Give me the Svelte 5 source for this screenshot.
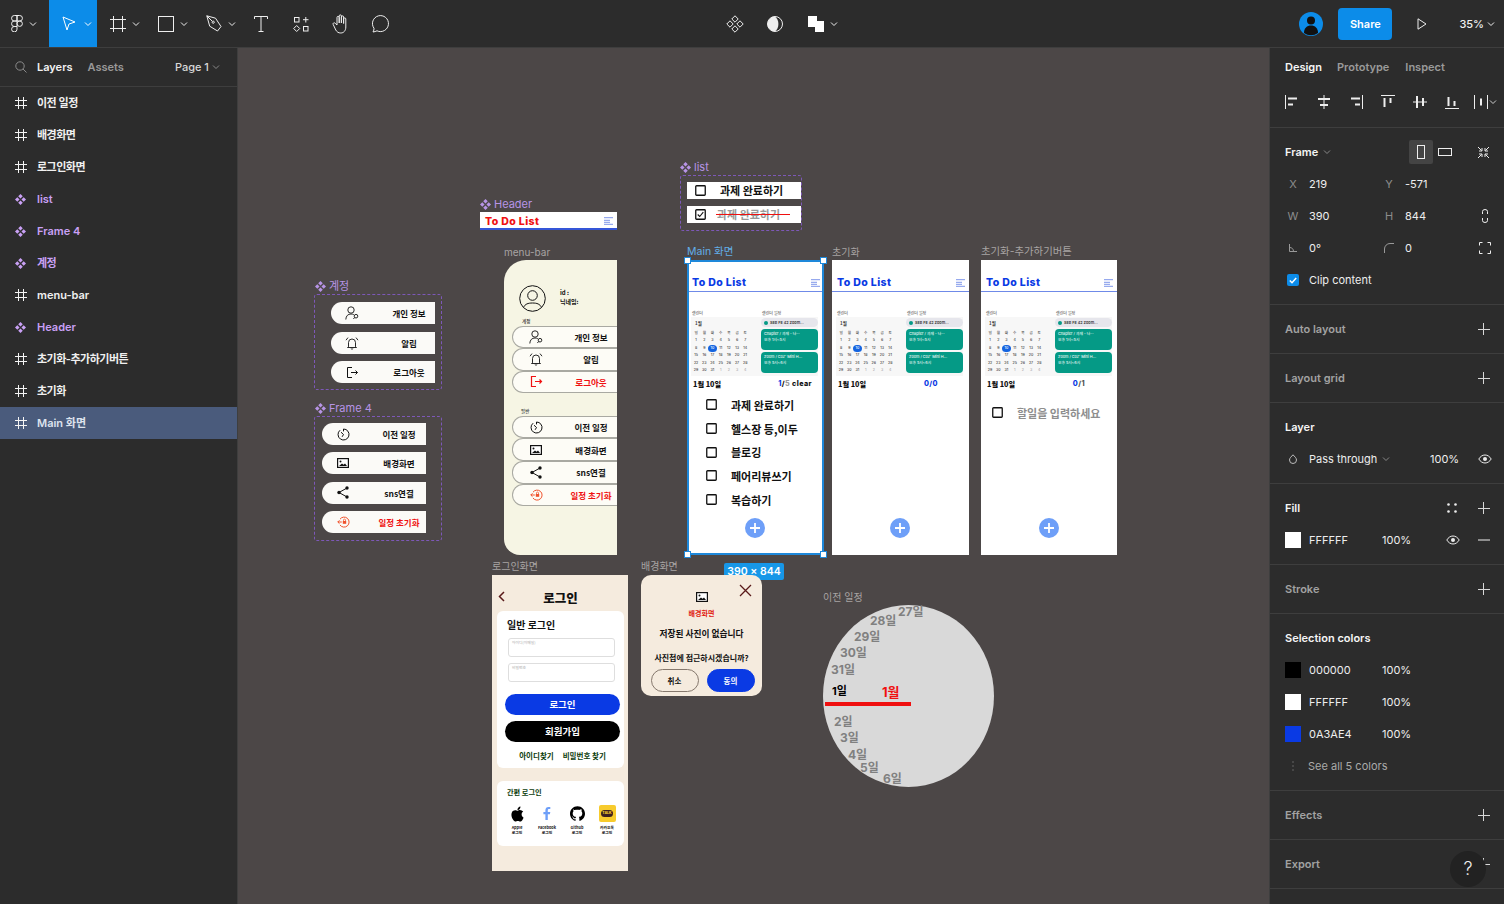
<script>
  const layers = [
    { name: '이전 일정', kind: 'frame' },
    { name: '배경화면', kind: 'frame' },
    { name: '로그인화면', kind: 'frame' },
    { name: 'list', kind: 'comp' },
    { name: 'Frame 4', kind: 'comp' },
    { name: '계정', kind: 'comp' },
    { name: 'menu-bar', kind: 'frame' },
    { name: 'Header', kind: 'comp' },
    { name: '초기화-추가하기버튼', kind: 'frame' },
    { name: '초기화', kind: 'frame' },
    { name: 'Main 화면', kind: 'frame', selected: true }
  ];

  const isKo = (s) => /^[가-힣\s-]+$/.test(s);

  const account = [
    { icon: 'person', label: '개인 정보' },
    { icon: 'bell', label: '알림' },
    { icon: 'logout', label: '로그아웃' }
  ];
  const general = [
    { icon: 'clock', label: '이전 일정' },
    { icon: 'image', label: '배경화면' },
    { icon: 'share', label: 'sns연결' },
    { icon: 'reset', label: '일정 초기화', red: true }
  ];

  const weekdays = ['일', '월', '화', '수', '목', '금', '토'];
  const days = Array.from({ length: 31 }, (_, i) => i + 1);
  const nextDays = [1, 2, 3, 4];

  const tasks = ['과제 완료하기', '헬스장 등,이두', '블로깅', '페어리뷰쓰기', '복습하기'];

  const dial = [
    { t: '27일', x: 75, y: 0 },
    { t: '28일', x: 47, y: 9 },
    { t: '29일', x: 31, y: 25 },
    { t: '30일', x: 17, y: 41 },
    { t: '31일', x: 8, y: 58 },
    { t: '2일', x: 11, y: 110 },
    { t: '3일', x: 17, y: 126 },
    { t: '4일', x: 25, y: 143 },
    { t: '5일', x: 37, y: 156 },
    { t: '6일', x: 60, y: 167 }
  ];

  const colors = [
    { hex: '000000', c: '#000000' },
    { hex: 'FFFFFF', c: '#ffffff' },
    { hex: '0A3AE4', c: '#0a3ae4' }
  ];

  const socials = [
    { icon: 'apple', l1: 'Apple', l2: '로그인' },
    { icon: 'facebook', l1: 'Facebook', l2: '로그인' },
    { icon: 'github', l1: 'Github', l2: '로그인' },
    { icon: 'kakao', l1: '카카오톡', l2: '로그인' }
  ];
</script>

{#snippet chev()}
  <svg class="chev" width="8" height="8" viewBox="0 0 8 8"><path d="M1 2.5 4 5.5 7 2.5" fill="none" stroke="currentColor" /></svg>
{/snippet}

{#snippet plus()}
  <svg width="12" height="12" viewBox="0 0 12 12"><path d="M5.500 0v12M0 6.500h12" stroke="#d8d8d8" /></svg>
{/snippet}

{#snippet eye()}
  <svg width="14" height="10" viewBox="0 0 14 10"><path d="M.8 5C2.400 2.400 4.500 1 7 1s4.600 1.400 6.200 4C11.600 7.600 9.500 9 7 9S2.400 7.600.8 5Z" fill="none" stroke="#eee" /><circle cx="7" cy="5" r="2" fill="#eee" /></svg>
{/snippet}

{#snippet comp4(color, size = 13)}
  <svg width={size} height={size} viewBox="0 0 13 13" fill={color}>
    <path d="M6.500 0 9.200 2.700 6.500 5.400 3.800 2.700ZM2.700 3.800 5.400 6.500 2.700 9.200 0 6.500ZM10.300 3.800 13 6.500 10.300 9.200 7.600 6.500ZM6.500 7.600 9.200 10.300 6.500 13 3.800 10.300Z" />
  </svg>
{/snippet}

{#snippet hash()}
  <svg width="12" height="12" viewBox="0 0 12 12"><path d="M3.500 0v12M8.500 0v12M0 3.500h12M0 8.500h12" stroke="#f4f4f4" /></svg>
{/snippet}

{#snippet burger()}
  <svg class="burger" width="9" height="8" viewBox="0 0 9 8"><path d="M0 .7h9M0 3.300h6M0 5.300h6M0 7.300h9" stroke="#6f8ae8" stroke-width=".9" /></svg>
{/snippet}

{#snippet glyph(name)}
  {#if name === 'person'}
    <svg width="15" height="14" viewBox="0 0 15 14" fill="none" stroke="#111" stroke-width=".9"><circle cx="6" cy="4" r="3.200" /><path d="M.8 13.500C1 9.800 3 8 6 8c1 0 2 .2 2.800.7" /><circle cx="11" cy="10.200" r="1.800" /><path d="M9.600 11.500 8.400 13" /></svg>
  {:else if name === 'bell'}
    <svg width="14" height="14" viewBox="0 0 14 14" fill="none" stroke="#111" stroke-width=".9"><path d="M3.500 10.800V6.500a3.500 3.500 0 0 1 7 0v4.300l1 .7h-9ZM5.800 12.500c.5.700 1.900.7 2.400 0M1 4.200 3 1.600M13 4.200 11 1.600" /></svg>
  {:else if name === 'logout'}
    <svg width="13" height="13" viewBox="0 0 13 13" fill="none" stroke="#111" stroke-width="1"><path d="M6 1.500H1.500v10H6M5 6.500h6.500M9.500 4.500l2 2-2 2" /></svg>
  {:else if name === 'logout-red'}
    <svg width="13" height="13" viewBox="0 0 13 13" fill="none" stroke="#f01010" stroke-width="1.200"><path d="M6 1.500H1.500v10H6M5 6.500h6.500M9.500 4.500l2 2-2 2" /></svg>
  {:else if name === 'clock'}
    <svg width="13" height="13" viewBox="0 0 13 13" fill="none" stroke="#111" stroke-width="1"><path d="M6.500 1a5.500 5.500 0 1 1-3.400 1.200M6.500 1v2.400M4 4.200l2.500 2.300-1.400 2.300" /></svg>
  {:else if name === 'image'}
    <svg width="12" height="10" viewBox="0 0 12 10"><rect x=".6" y=".6" width="10.800" height="8.800" fill="#fff" stroke="#111" stroke-width="1.200" /><circle cx="3.500" cy="3.500" r="1" fill="#111" /><path d="M2 8 5 5.500 6.500 6.800 8 5.500 10 8Z" fill="#111" /></svg>
  {:else if name === 'share'}
    <svg width="12" height="13" viewBox="0 0 12 13"><path d="M10 2 2 6.500l8 4.500" fill="none" stroke="#111" /><circle cx="10" cy="2" r="1.700" fill="#111" /><circle cx="2" cy="6.500" r="1.700" fill="#111" /><circle cx="10" cy="11" r="1.700" fill="#111" /></svg>
  {:else if name === 'reset'}
    <svg width="13" height="12" viewBox="0 0 13 12" fill="none" stroke="#f0522c" stroke-width="1"><path d="M3 3.200A5 5 0 1 1 3 9M.8 6h4M2.500 4.300.8 6l1.700 1.700" /><rect x="5.800" y="5" width="3.400" height="2.800" fill="#f0522c" stroke="none" /><path d="M6.500 5V4a1 1 0 0 1 2 0v1" stroke-width=".7" /></svg>
  {:else if name === 'apple'}
    <svg width="15" height="16" viewBox="0 0 24 24" fill="#000"><path d="M12.152 6.896c-.948 0-2.415-1.078-3.960-1.040-2.040.027-3.910 1.183-4.961 3.014-2.117 3.675-.546 9.103 1.519 12.090 1.013 1.454 2.208 3.090 3.792 3.039 1.520-.065 2.090-.987 3.935-.987 1.831 0 2.350.987 3.960.948 1.637-.026 2.676-1.480 3.676-2.948 1.156-1.688 1.636-3.325 1.662-3.415-.039-.013-3.182-1.221-3.220-4.857-.026-3.040 2.480-4.494 2.597-4.559-1.429-2.090-3.623-2.324-4.390-2.376-2-.156-3.675 1.090-4.610 1.090zM15.530 3.830c.843-1.012 1.400-2.427 1.245-3.830-1.207.052-2.662.805-3.532 1.818-.780.896-1.454 2.338-1.273 3.714 1.338.104 2.715-.688 3.559-1.701" /></svg>
  {:else if name === 'facebook'}
    <svg width="8" height="13" viewBox="0 0 8 13" fill="#6e9ff8"><path d="M2.400 13V7.200H.4V5h2V3.300C2.400 1.200 3.600 0 5.500 0c.8 0 1.600.1 1.800.1v2H6.100C5 2.100 4.800 2.700 4.800 3.400V5h2.500l-.4 2.200H4.800V13Z" /></svg>
  {:else if name === 'github'}
    <svg width="15" height="15" viewBox="0 0 24 24" fill="#000"><path d="M12 .297c-6.630 0-12 5.373-12 12 0 5.303 3.438 9.800 8.205 11.385.6.113.82-.258.82-.577 0-.285-.01-1.040-.015-2.040-3.338.724-4.042-1.610-4.042-1.610C4.422 18.070 3.633 17.700 3.633 17.700c-1.087-.744.084-.729.084-.729 1.205.084 1.838 1.236 1.838 1.236 1.070 1.835 2.809 1.305 3.495.998.108-.776.417-1.305.76-1.605-2.665-.3-5.466-1.332-5.466-5.930 0-1.310.465-2.380 1.235-3.220-.135-.303-.54-1.523.105-3.176 0 0 1.005-.322 3.300 1.230.96-.267 1.980-.399 3-.405 1.020.006 2.040.138 3 .405 2.280-1.552 3.285-1.230 3.285-1.230.645 1.653.24 2.873.12 3.176.765.84 1.230 1.910 1.230 3.220 0 4.610-2.805 5.625-5.475 5.920.42.36.81 1.096.81 2.220 0 1.606-.015 2.896-.015 3.286 0 .315.21.69.825.57C20.565 22.092 24 17.592 24 12.297c0-6.627-5.373-12-12-12" /></svg>
  {:else if name === 'kakao'}
    <div class="kakao"><span>TALK</span></div>
  {/if}
{/snippet}

{#snippet pill(item, kind)}
  <div class="pill {kind}" class:red={item.red}>
    <span class="pill-ic">{@render glyph(item.icon)}</span>
    <span class="pill-tx">{item.label}</span>
  </div>
{/snippet}

{#snippet calendar()}
  <div class="cal">
    <div class="cal-left">
      <div class="cal-head">캘린더</div>
      <div class="cal-box">
        <div class="cal-month">1월</div>
        <div class="cal-grid">
          {#each weekdays as w}<span>{w}</span>{/each}
          {#each days as d}<span class:today={d === 10}>{d}</span>{/each}
          {#each nextDays as d}<span class="next">{d}</span>{/each}
        </div>
      </div>
    </div>
    <div class="cal-right">
      <div class="cal-head">캘린더 일정</div>
      <div class="cal-box side">
        <div class="ev-pill"><i></i>SEB FE 42 Zoom...</div>
        <div class="ev">Chapter / 과제 - 나···<br />오후 1시~5시</div>
        <div class="ev">Zoom / Coz' Mini H...<br />오후 5시~6시</div>
      </div>
    </div>
  </div>
{/snippet}

{#snippet todoHead()}
  <div class="todo-head"><span>To Do List</span>{@render burger()}</div>
{/snippet}

{#snippet checkbox(checked = false)}
  <svg class="cb" width="11" height="11" viewBox="0 0 11 11"><rect x=".75" y=".75" width="9.500" height="9.500" rx=".8" fill="#fff" stroke="#111" stroke-width="1.300" />{#if checked}<path d="M2.700 5.500 4.700 7.500 8.300 3.200" fill="none" stroke="#111" stroke-width="1.100" />{/if}</svg>
{/snippet}

{#snippet addBtn()}
  <div class="add"><svg width="10" height="10" viewBox="0 0 10 10"><path d="M5 0v10M0 5h10" stroke="#fff" stroke-width="1.800" /></svg></div>
{/snippet}

<div class="app">
  <header class="toolbar">
    <div class="tools">
      <button class="tool w49">
        <svg width="12" height="17" viewBox="0 0 12 17" fill="none" stroke="#eee"><path d="M6 .5H3.300a2.700 2.700 0 0 0 0 5.500H6ZM6 .5h2.700a2.700 2.700 0 0 1 0 5.500H6ZM6 6H3.300a2.700 2.700 0 0 0 0 5.500H6ZM11.400 8.700a2.700 2.700 0 1 1-5.400 0 2.700 2.700 0 0 1 5.400 0ZM6 11.500H3.300A2.700 2.700 0 1 0 6 14.200Z" /></svg>
        {@render chev()}
      </button>
      <button class="tool w48 active">
        <svg width="14" height="15" viewBox="0 0 14 15" fill="none" stroke="#fff"><path d="M1 1 5 14 7 8 13 6Z" /></svg>
        {@render chev()}
      </button>
      <button class="tool w48">
        <svg width="16" height="16" viewBox="0 0 16 16"><path d="M3.500 0v16M12.500 0v16M0 3.500h16M0 12.500h16" stroke="#eee" /></svg>
        {@render chev()}
      </button>
      <button class="tool w48">
        <svg width="16" height="16" viewBox="0 0 16 16"><rect x=".5" y=".5" width="15" height="15" fill="none" stroke="#eee" /></svg>
        {@render chev()}
      </button>
      <button class="tool w48">
        <svg width="16" height="17" viewBox="0 0 16 17" fill="none" stroke="#eee"><path d="M.8.800 9.500 3.200 15 11.500l-3.500 4.500-7.800-4.800Z" /><path d="M.8.800 6 6" /><circle cx="7.200" cy="7.200" r="1.100" /></svg>
        {@render chev()}
      </button>
      <button class="tool w40">
        <svg width="14" height="16" viewBox="0 0 14 16"><path d="M.5 3V.5h13V3M7 .5v15M4.500 15.500h5" fill="none" stroke="#eee" /></svg>
      </button>
      <button class="tool w40">
        <svg width="16" height="16" viewBox="0 0 16 16" fill="none" stroke="#eee"><rect x="1.500" y="1.500" width="4.500" height="4.500" /><rect x="10.500" y="10.500" width="4.500" height="4.500" /><path d="M12.800 1v5.500M10 3.700h5.500M3.700 9.500l3 3-3 3-3-3Z" /></svg>
      </button>
      <button class="tool w40">
        <svg width="18" height="20" viewBox="0 0 18 20" fill="none" stroke="#eee"><path d="M5 11V3.500a1.100 1.100 0 0 1 2.200 0V9 2a1.100 1.100 0 0 1 2.200 0v7-6a1.100 1.100 0 0 1 2.200 0v6.500-4.500a1.100 1.100 0 0 1 2.200 0v8c0 3.600-2 6-5 6-2.500 0-3.800-1-5-3L1.200 10.500c-.7-1.300 1-2.400 2-1.200Z" /></svg>
      </button>
      <button class="tool w40">
        <svg width="18" height="18" viewBox="0 0 18 18" fill="none" stroke="#eee"><path d="M1 17c.8-1.200 1.100-2.600 1-3.700A8 8 0 1 1 5 15.800 12 12 0 0 1 1 17Z" /></svg>
      </button>
    </div>
    <div class="tools mid">
      <button class="tool w40">
        <svg width="18" height="18" viewBox="0 0 18 18" fill="none" stroke="#eee"><path d="M9 .8 12.200 4 9 7.200 5.800 4ZM4 5.800 7.200 9 4 12.200.8 9ZM14 5.800 17.200 9 14 12.200 10.800 9ZM9 10.800 12.200 14 9 17.200 5.800 14Z" /></svg>
      </button>
      <button class="tool w40">
        <svg width="16" height="16" viewBox="0 0 16 16"><circle cx="8" cy="8" r="7.500" fill="none" stroke="#eee" /><path d="M8 .5a7.500 7.500 0 0 0 0 15c2.300-1.800 3.400-4.400 3.400-7.500S10.300 2.300 8 .5Z" fill="#eee" /></svg>
      </button>
      <button class="tool w48">
        <svg width="16" height="16" viewBox="0 0 16 16" fill="#fff"><path d="M0 0h9v5h7v11H7v-5H0Z" /></svg>
        {@render chev()}
      </button>
    </div>
    <div class="tools right">
      <svg class="avatar" width="24" height="24" viewBox="0 0 24 24"><circle cx="12" cy="12" r="12" fill="#0c8ce9" /><circle cx="12" cy="8.500" r="4" fill="#111" /><path d="M5 21c0-5 3-7.500 7-7.500s7 2.500 7 7.500a12 12 0 0 1-14 0Z" fill="#111" /></svg>
      <div class="share">Share</div>
      <svg class="play" width="10" height="12" viewBox="0 0 10 12"><path d="M1 .8 9 6l-8 5.200Z" fill="none" stroke="#eee" /></svg>
      <div class="zoom-val">35%{@render chev()}</div>
    </div>
  </header>

  <main class="body">
    <aside class="left">
      <div class="left-head">
        <svg width="12" height="12" viewBox="0 0 12 12" fill="none" stroke="#8a8a8a"><circle cx="5" cy="5" r="4.200" /><path d="M8 8l3.500 3.500" /></svg>
        <span class="tab on">Layers</span>
        <span class="tab">Assets</span>
        <span class="page">Page 1{@render chev()}</span>
      </div>
      {#each layers as l}
        <div class="layer" class:selected={l.selected} class:comp={l.kind === 'comp'}>
          <span class="layer-ic">
            {#if l.kind === 'comp'}{@render comp4('#c9a0f5', 11)}{:else}{@render hash()}{/if}
          </span>
          <span class:ko={isKo(l.name)}>{l.name}</span>
        </div>
      {/each}
    </aside>

    <section class="canvas">
      <div class="world">
        <!-- 계정 -->
        <div class="lbl comp-lbl at-acc-l">{@render comp4('#b794e6', 11)}계정</div>
        <div class="dash acc">
          {#each account as item}{@render pill(item, 'a')}{/each}
        </div>

        <!-- Frame 4 -->
        <div class="lbl comp-lbl at-f4-l">{@render comp4('#b794e6', 11)}Frame 4</div>
        <div class="dash f4">
          {#each general as item}{@render pill(item, 'c')}{/each}
        </div>

        <!-- Header -->
        <div class="lbl comp-lbl at-hd-l">{@render comp4('#b794e6', 11)}Header</div>
        <div class="head-comp"><span>To Do List</span>{@render burger()}</div>

        <!-- menu-bar -->
        <div class="lbl at-mb-l">menu-bar</div>
        <div class="menubar">
          <div class="mb-user">
            <svg width="27" height="27" viewBox="0 0 27 27" fill="none" stroke="#111" stroke-width="1"><circle cx="13.500" cy="13.500" r="12.800" /><circle cx="13.500" cy="10.500" r="4.800" /><path d="M4.500 22.500c1.500-3.500 4.500-4.500 9-4.500s7.500 1 9 4.500" /></svg>
            <div class="mb-id">id :<br />닉네임:</div>
          </div>
          <div class="mb-cap first">계정</div>
          <div class="mb-list">
            {@render pill(account[0], 'b')}
            {@render pill(account[1], 'b')}
            <div class="pill b red">
              <span class="pill-ic">{@render glyph('logout-red')}</span>
              <span class="pill-tx">로그아웃</span>
            </div>
          </div>
          <div class="mb-cap second">일반</div>
          <div class="mb-list">
            {#each general as item}{@render pill(item, 'b')}{/each}
          </div>
        </div>

        <!-- list -->
        <div class="lbl comp-lbl at-li-l">{@render comp4('#b794e6', 11)}list</div>
        <div class="dash li">
          <div class="li-row">{@render checkbox()}<span>과제 완료하기</span></div>
          <div class="li-row done">{@render checkbox(true)}<span>과제 완료하기</span><i></i></div>
        </div>

        <!-- Main -->
        <div class="lbl at-main-l">Main 화면</div>
        <div class="todo main-frame">
          {@render todoHead()}
          {@render calendar()}
          <div class="date-row"><b>1월 10일</b><span class="count wide"><em>1</em>/<s>5</s> clear</span></div>
          <div class="tasks">
            {#each tasks as t}
              <div class="task">{@render checkbox()}<span>{t}</span></div>
            {/each}
          </div>
          {@render addBtn()}
          <i class="h tl"></i><i class="h tr"></i><i class="h bl"></i><i class="h br"></i>
        </div>
        <div class="size-tag">390 × 844</div>

        <!-- 초기화 -->
        <div class="lbl at-in-l">초기화</div>
        <div class="todo init-frame">
          {@render todoHead()}
          {@render calendar()}
          <div class="date-row"><b>1월 10일</b><span class="count c00"><em>0/0</em></span></div>
          {@render addBtn()}
        </div>

        <!-- 초기화-추가하기버튼 -->
        <div class="lbl at-ia-l">초기화-추가하기버튼</div>
        <div class="todo add-frame">
          {@render todoHead()}
          {@render calendar()}
          <div class="date-row"><b>1월 10일</b><span class="count c01"><em>0</em>/1</span></div>
          <div class="task hint">{@render checkbox()}<span>할일을 입력하세요</span></div>
          {@render addBtn()}
        </div>

        <!-- 로그인화면 -->
        <div class="lbl at-lg-l">로그인화면</div>
        <div class="login">
          <div class="login-top">
            <svg width="7" height="11" viewBox="0 0 7 11"><path d="M6 1 1.500 5.500 6 10" fill="none" stroke="#5a1a1a" stroke-width="1.500" /></svg>
            <b>로그인</b>
          </div>
          <div class="login-card">
            <div class="lc-title">일반 로그인</div>
            <div class="inp">아이디(이메일)</div>
            <div class="inp">비밀번호</div>
            <div class="lbtn blue">로그인</div>
            <div class="lbtn black">회원가입</div>
            <div class="lc-links"><span>아이디찾기</span><span>비밀번호 찾기</span></div>
          </div>
          <div class="login-card easy">
            <div class="easy-title">간편 로그인</div>
            <div class="socials">
              {#each socials as s}
                <div class="soc">
                  <div class="soc-ic">{@render glyph(s.icon)}</div>
                  <div class="soc-tx">{s.l1}<br />{s.l2}</div>
                </div>
              {/each}
            </div>
          </div>
        </div>

        <!-- 배경화면 -->
        <div class="lbl at-bg-l">배경화면</div>
        <div class="bgd">
          <svg class="bgd-x" width="13" height="13" viewBox="0 0 13 13"><path d="M1 1l11 11M12 1 1 12" stroke="#5a1a1a" stroke-width="1.300" /></svg>
          {@render glyph('image')}
          <div class="bgd-red">배경화면</div>
          <div class="bgd-a">저장된 사진이 없습니다</div>
          <div class="bgd-b">사진첩에 접근하시겠습니까?</div>
          <div class="bgd-btns"><span class="no">취소</span><span class="yes">동의</span></div>
        </div>

        <!-- 이전 일정 -->
        <div class="lbl at-pv-l">이전 일정</div>
        <div class="dial">
          {#each dial as d}
            <span class="dial-day" style="left:{d.x}px;top:{d.y}px">{d.t}</span>
          {/each}
          <span class="dial-now">1일</span>
          <span class="dial-month">1월</span>
          <i class="dial-line"></i>
        </div>
      </div>
    </section>

    <aside class="right-panel">
      <div class="tabs">
        <span class="on">Design</span><span>Prototype</span><span class="insp">Inspect</span>
      </div>
      <div class="aligns">
        <svg width="14" height="14" viewBox="0 0 14 14"><path d="M.5 0v14" stroke="#eee" /><path d="M3 3.500h9M3 9.500h5" stroke="#eee" stroke-width="2" /></svg>
        <svg width="14" height="14" viewBox="0 0 14 14"><path d="M7 0v14" stroke="#eee" /><path d="M1 4h12M3 10h8" stroke="#eee" stroke-width="2" /></svg>
        <svg width="14" height="14" viewBox="0 0 14 14"><path d="M13.500 0v14" stroke="#eee" /><path d="M2 3.500h9M6 9.500h5" stroke="#eee" stroke-width="2" /></svg>
        <svg width="14" height="14" viewBox="0 0 14 14"><path d="M0 .5h14" stroke="#eee" /><path d="M3.500 3v9M9.500 3v5" stroke="#eee" stroke-width="2" /></svg>
        <svg width="14" height="14" viewBox="0 0 14 14"><path d="M0 7h14" stroke="#eee" /><path d="M4 1v12M10 3v8" stroke="#eee" stroke-width="2" /></svg>
        <svg width="14" height="14" viewBox="0 0 14 14"><path d="M0 13.500h14" stroke="#eee" /><path d="M3.500 2v9M9.500 6v5" stroke="#eee" stroke-width="2" /></svg>
        <span class="dist">
          <svg width="14" height="14" viewBox="0 0 14 14"><path d="M.5 0v14M13.500 0v14" stroke="#eee" /><path d="M7 3.500v7" stroke="#eee" stroke-width="2" /></svg>
          {@render chev()}
        </span>
      </div>

      <div class="sec first">
        <div class="sec-title">
          <span class="on">Frame{@render chev()}</span>
          <span class="orient">
            <i class="act"><svg width="8" height="14" viewBox="0 0 8 14"><rect x=".5" y=".5" width="7" height="13" fill="none" stroke="#eee" /></svg></i>
            <i><svg width="14" height="8" viewBox="0 0 14 8"><rect x=".5" y=".5" width="13" height="7" fill="none" stroke="#eee" /></svg></i>
          </span>
          <svg class="fit" width="13" height="13" viewBox="0 0 13 13" fill="none" stroke="#eee"><path d="M1 1l3.500 3.500M5 2v3H2M12 1 8.500 4.500M8 2v3h3M1 12l3.500-3.500M5 11V8H2M12 12 8.500 8.500M8 11V8h3" /></svg>
        </div>
        <div class="props">
          <span class="prop"><em>X</em>219</span><span class="prop"><em>Y</em>-571</span><span></span>
          <span class="prop"><em>W</em>390</span><span class="prop"><em>H</em>844</span>
          <span class="prop-ic"><svg width="6" height="14" viewBox="0 0 6 14" fill="none" stroke="#eee"><path d="M.5 5V2.500a2.500 2 0 0 1 5 0V5M.5 9v2.500a2.500 2 0 0 0 5 0V9" /></svg></span>
          <span class="prop"><em><svg width="8" height="8" viewBox="0 0 8 8" fill="none" stroke="#999"><path d="M.5 0v7.500H8M.5 3.500C3 3.500 4.500 5 4.500 7.500" /></svg></em>0°</span>
          <span class="prop"><em><svg width="10" height="10" viewBox="0 0 10 10" fill="none" stroke="#999"><path d="M.5 10V6A5.500 5.500 0 0 1 6 .5h4" /></svg></em>0</span>
          <span class="prop-ic"><svg width="12" height="12" viewBox="0 0 12 12" fill="none" stroke="#eee"><path d="M.5 3.500V.5h3M8.500.5h3v3M11.500 8.500v3h-3M3.500 11.500h-3v-3" /></svg></span>
        </div>
        <div class="row clip">
          <span class="check"><svg width="8" height="7" viewBox="0 0 8 7"><path d="M.8 3.500 3 5.700 7.200 1" fill="none" stroke="#fff" stroke-width="1.500" /></svg></span>
          Clip content
        </div>
      </div>

      <div class="sec"><div class="sec-title dim">Auto layout{@render plus()}</div></div>
      <div class="sec"><div class="sec-title dim">Layout grid{@render plus()}</div></div>

      <div class="sec">
        <div class="sec-title"><span class="on">Layer</span></div>
        <div class="row layer-row">
          <svg class="drop" width="8" height="10" viewBox="0 0 8 10"><path d="M4 .8C5.500 2.500 7.500 4 7.500 6A3.500 3.500 0 0 1 .5 6C.5 4 2.500 2.500 4 .8Z" fill="none" stroke="#bbb" /></svg>
          <span class="pass">Pass through{@render chev()}</span>
          <span class="pct">100%</span>
          {@render eye()}
        </div>
      </div>

      <div class="sec">
        <div class="sec-title"><span class="on">Fill</span>
          <span class="fill-act">
            <svg width="10" height="10" viewBox="0 0 10 10" fill="#eee"><circle cx="1.500" cy="1.500" r="1.300" /><circle cx="8.500" cy="1.500" r="1.300" /><circle cx="1.500" cy="8.500" r="1.300" /><circle cx="8.500" cy="8.500" r="1.300" /></svg>
            {@render plus()}
          </span>
        </div>
        <div class="row color">
          <i class="sw white"></i><span class="hex">FFFFFF</span><span class="pc">100%</span>
          <span class="fill-act narrow">{@render eye()}<svg width="12" height="2" viewBox="0 0 12 2"><path d="M0 1h12" stroke="#eee" /></svg></span>
        </div>
      </div>

      <div class="sec"><div class="sec-title dim">Stroke{@render plus()}</div></div>

      <div class="sec">
        <div class="sec-title"><span class="on">Selection colors</span></div>
        {#each colors as c}
          <div class="row color">
            <i class="sw" style="background:{c.c}"></i><span class="hex">{c.hex}</span><span class="pc">100%</span>
          </div>
        {/each}
        <div class="row see"><svg width="2" height="10" viewBox="0 0 2 10" fill="#777"><circle cx="1" cy="1" r=".7" /><circle cx="1" cy="5" r=".7" /><circle cx="1" cy="9" r=".7" /></svg>See all 5 colors</div>
      </div>

      <div class="sec"><div class="sec-title dim">Effects{@render plus()}</div></div>
      <div class="sec"><div class="sec-title dim">Export{@render plus()}</div></div>
      <div class="help">?</div>
    </aside>
  </main>
</div>

<style>
  :global(body) {
    margin: 0;
    background: #2c2c2c;
  }
  .app {
    width: 1504px;
    height: 904px;
    display: flex;
    flex-direction: column;
    overflow: hidden;
    background: #2c2c2c;
    color: #eee;
    font: 11px/16px Inter, "Noto Sans CJK KR", sans-serif;
  }
  .toolbar {
    height: 47px;
    flex: none;
    display: flex;
    border-bottom: 1px solid #3e3e3e;
    position: relative;
  }
  .tools {
    display: flex;
    align-items: center;
  }
  .tools.mid {
    margin-left: 314px;
  }
  .tools.right {
    margin-left: auto;
  }
  .tool {
    border: 0;
    padding: 0;
    background: none;
    height: 47px;
    color: #eee;
    display: flex;
    align-items: center;
    justify-content: center;
  }
  .w49 {
    width: 49px;
    justify-content: flex-start;
    padding-left: 11px;
  }
  .w49 .chev {
    margin: 0 12px 0 auto;
  }
  .w48 {
    width: 48px;
    justify-content: flex-start;
    padding-left: 13px;
  }
  .w48 .chev {
    margin: 0 5px 0 auto;
  }
  .w40 { width: 40px; }
  .tool.active {
    background: #0c8ce9;
    color: #fff;
  }
  .chev {
    flex: none;
  }
  .avatar {
    margin-right: 15px;
  }
  .share {
    width: 54px;
    height: 32px;
    border-radius: 4px;
    background: #0c8ce9;
    color: #fff;
    font-weight: 600;
    display: flex;
    align-items: center;
    justify-content: center;
  }
  .play {
    margin: 0 32px 0 25px;
  }
  .zoom-val {
    display: flex;
    align-items: center;
    gap: 3px;
    padding-right: 9px;
    font-weight: 500;
    color: #f0f0f0;
  }

  .body {
    flex: 1;
    display: flex;
    min-height: 0;
  }
  .left {
    width: 237px;
    flex: none;
    border-right: 1px solid #3e3e3e;
    background: #2c2c2c;
  }
  .left-head {
    display: flex;
    align-items: center;
    border-bottom: 1px solid #3e3e3e;
    padding-left: 15px;
    font-weight: 600;
    box-sizing: border-box;
    height: 39px;
  }
  .left-head .tab {
    color: #999;
    margin-left: 15px;
  }
  .left-head .tab.on {
    color: #f2f2f2;
    margin-left: 10px;
  }
  .page {
    margin-left: 51px;
    color: #d8d8d8;
    font-weight: 500;
    display: flex;
    align-items: center;
    gap: 3px;
  }
  .page .chev,
  .sec-title .chev {
    color: #888;
  }
  .layer {
    height: 32px;
    display: flex;
    align-items: center;
    padding-left: 15px;
    font-weight: 600;
    color: #f0f0f0;
  }
  .layer .ko {
    letter-spacing: -0.5px;
  }
  .layer-ic {
    width: 22px;
    display: flex;
  }
  .layer.comp {
    color: #c9a0f5;
  }
  .layer.selected {
    background: #4a5b7c;
    color: #dde3ee;
  }

  .canvas {
    flex: 1;
    position: relative;
    overflow: hidden;
    background: #4c4747;
  }
  .world {
    position: absolute;
    left: -238px;
    top: -48px;
    width: 1504px;
    height: 904px;
    font-family: Inter, "Noto Sans CJK KR", sans-serif;
  }
  .lbl {
    position: absolute;
    color: #a8a4a3;
    font-size: 10px;
    line-height: 14px;
    white-space: nowrap;
  }
  .comp-lbl {
    display: flex;
    align-items: center;
    gap: 3px;
    color: #b794e6;
    font-size: 11px;
  }
  .at-acc-l { left: 315px; top: 279px; }
  .at-f4-l { left: 315px; top: 401px; }
  .at-hd-l { left: 480px; top: 197px; }
  .at-mb-l { left: 504px; top: 245px; }
  .at-li-l { left: 680px; top: 160px; }
  .at-main-l { left: 687px; top: 245px; color: #62aee8; font-size: 10.5px; }
  .at-in-l { left: 832px; top: 245px; }
  .at-ia-l { left: 981px; top: 245px; font-size: 10.4px; }
  .at-lg-l { left: 492px; top: 559px; }
  .at-bg-l { left: 641px; top: 559px; }
  .at-pv-l { left: 823px; top: 590px; }

  .dash {
    position: absolute;
    border: 1px dashed #7d58b8;
    border-radius: 3px;
    box-sizing: border-box;
    display: flex;
    flex-direction: column;
  }
  .acc {
    left: 314px;
    top: 294px;
    width: 128px;
    height: 96px;
    padding: 7px 0 0 16px;
    gap: 7.5px;
  }
  .f4 {
    left: 314px;
    top: 416px;
    width: 128px;
    height: 125px;
    padding: 6px 0 0 7px;
    gap: 7.3px;
  }
  .pill {
    display: flex;
    align-items: center;
    height: 22px;
    width: 104px;
    flex: none;
    border-radius: 11px 0 0 11px;
    background: #fbfaf7;
    color: #111;
    font: 700 8.5px/12px "Noto Sans CJK KR", sans-serif;
  }
  .pill.red .pill-tx {
    color: #f01010;
  }
  .pill-ic {
    display: flex;
    justify-content: center;
    flex: none;
  }
  .pill-tx {
    flex: 1;
    text-align: center;
    white-space: nowrap;
  }
  .pill.a .pill-ic { width: 42px; }
  .pill.a .pill-tx { margin-left: 10px; }
  .pill.c .pill-ic { width: 42px; }
  .pill.c .pill-tx { margin-left: 8px; }
  .pill.b {
    width: 105px;
    background: #fdfcf6;
    border: solid #a9a9a2;
    border-width: 1px 0 1px 1px;
    box-sizing: border-box;
    height: 22.6px;
  }
  .pill.b .pill-ic { width: 46px; }
  .pill.b .pill-tx { margin-left: 6px; }

  .head-comp {
    position: absolute;
    left: 480px;
    top: 212px;
    width: 137px;
    height: 18px;
    box-sizing: border-box;
    background: #fff;
    border-bottom: 2px solid #3556d8;
    color: #f01010;
    font: 800 10.5px/15px Inter, sans-serif;
    letter-spacing: 0.4px;
    padding: 2px 4px 0 5px;
    display: flex;
    align-items: center;
    justify-content: space-between;
  }

  .menubar {
    position: absolute;
    left: 504px;
    top: 260px;
    width: 113px;
    height: 295px;
    box-sizing: border-box;
    padding-left: 8px;
    background: #f6f5e4;
    border-radius: 22px 0 0 16px;
    color: #111;
  }
  .mb-user {
    display: flex;
    align-items: flex-start;
    padding: 25px 0 0 7px;
    height: 31px;
  }
  .mb-id {
    margin: 4px 0 0 14px;
    font: 700 6px/8.5px "Noto Sans CJK KR", sans-serif;
  }
  .mb-cap {
    font: 500 4.5px/6px "Noto Sans CJK KR", sans-serif;
    padding-left: 10px;
    color: #333;
  }
  .mb-cap.first { margin-top: 2px; height: 7.5px; }
  .mb-cap.second { margin-top: 14.5px; height: 8px; padding-left: 9px; }
  .mb-list {
    display: flex;
    flex-direction: column;
  }

  .li {
    left: 680px;
    top: 175px;
    width: 122px;
    height: 56px;
    padding: 6px 0 0 6px;
    gap: 7px;
  }
  .li-row {
    position: relative;
    width: 114px;
    height: 17px;
    background: #fff;
    display: flex;
    align-items: center;
    padding: 0 0 1px 8px;
    box-sizing: border-box;
    font: 700 11px/14px "Noto Sans CJK KR", sans-serif;
    color: #111;
    gap: 14px;
  }
  .li-row.done span {
    color: #999;
    margin-left: -3px;
  }
  .li-row i {
    position: absolute;
    left: 29px;
    top: 8px;
    width: 74px;
    height: 1px;
    background: #f01010;
  }

  .todo {
    position: absolute;
    top: 260px;
    width: 137px;
    height: 295px;
    background: #fff;
    color: #111;
  }
  .main-frame {
    left: 687px;
    outline: 2px solid #1e88da;
    outline-offset: -2px;
  }
  .init-frame { left: 832px; }
  .add-frame { left: 981px; width: 136px; }
  .todo-head {
    height: 32px;
    box-sizing: border-box;
    border-bottom: 1.5px solid #6f8ae8;
    display: flex;
    align-items: flex-end;
    justify-content: space-between;
    padding: 0 4px 1px 5px;
    color: #0a3ae4;
    font: 800 10.5px/15px Inter, sans-serif;
    letter-spacing: 0.4px;
  }
  .burger {
    margin-bottom: 3px;
    flex: none;
  }
  .head-comp .burger {
    margin: 0;
  }
  .cal {
    display: grid;
    grid-template-columns: 70px 57px;
    margin: 17px 0 0 4px;
    height: 67px;
    color: #444;
  }
  .cal-head {
    font: 500 4px/8px "Noto Sans CJK KR", sans-serif;
    color: #666;
    padding-left: 1px;
  }
  .cal-box {
    background: #f7f7f7;
    height: 59px;
  }
  .cal-box.side {
    display: flex;
    flex-direction: column;
    gap: 2px;
    padding-top: 1px;
    box-sizing: border-box;
  }
  .cal-month {
    font: 700 4.5px/8px "Noto Sans CJK KR", sans-serif;
    padding: 2px 0 0 4px;
    height: 10px;
  }
  .cal-grid {
    display: grid;
    grid-template-columns: repeat(7, 8.2px);
    grid-auto-rows: 7.4px;
    padding-left: 1px;
    margin-top: 1px;
    font: 500 3.6px/7.4px Inter, "Noto Sans CJK KR", sans-serif;
    text-align: center;
    color: #444;
  }
  .cal-grid .next {
    color: #aaa;
  }
  .cal-grid .today {
    background: #1464e0;
    color: #fff;
    border-radius: 50%;
    height: 7.4px;
  }
  .ev-pill {
    height: 9px;
    border-radius: 5px;
    background: #e6e6ec;
    display: flex;
    align-items: center;
    gap: 2px;
    padding-left: 3px;
    font: 600 3.8px/9px Inter, sans-serif;
    white-space: nowrap;
    overflow: hidden;
    color: #333;
  }
  .ev-pill i {
    width: 4px;
    height: 4px;
    border-radius: 50%;
    background: #059a86;
    flex: none;
  }
  .ev {
    height: 21px;
    border-radius: 4px;
    background: #059a86;
    color: #e8f6f3;
    box-sizing: border-box;
    padding: 2px 3px;
    font: 500 3.8px/5.5px Inter, "Noto Sans CJK KR", sans-serif;
    white-space: nowrap;
    overflow: hidden;
  }
  .date-row {
    display: flex;
    justify-content: space-between;
    margin-top: 1px;
    padding: 0 12px 0 6px;
    height: 14px;
    align-items: center;
    font: 700 7.2px/10px "Noto Sans CJK KR", sans-serif;
  }
  .count {
    font: 800 7.2px/10px Inter, sans-serif;
    letter-spacing: 0.4px;
    color: #111;
  }
  .count em {
    font-style: normal;
    color: #0a3ae4;
  }
  .count s {
    text-decoration: none;
    color: #999;
  }
  .count.c00 { margin-right: 19px; }
  .count.c01 { margin-right: 20px; color: #555; }
  .tasks {
    padding-top: 2px;
    display: flex;
    flex-direction: column;
  }
  .task {
    height: 23.7px;
    display: flex;
    align-items: center;
    padding-left: 19px;
    gap: 14px;
    font: 700 11px/14px "Noto Sans CJK KR", sans-serif;
  }
  .task.hint {
    margin-top: 10px;
    padding-left: 11px;
    color: #8e8e8e;
  }
  .add {
    position: absolute;
    left: 58px;
    top: 258px;
    width: 20px;
    height: 20px;
    border-radius: 50%;
    background: #6e9ff8;
    display: flex;
    align-items: center;
    justify-content: center;
  }
  .h {
    position: absolute;
    width: 5px;
    height: 5px;
    background: #fff;
    border: 1px solid #1e88da;
  }
  .tl { left: -3px; top: -3px; }
  .tr { right: -3px; top: -3px; }
  .bl { left: -3px; bottom: -3px; }
  .br { right: -3px; bottom: -3px; }
  .size-tag {
    position: absolute;
    left: 724px;
    top: 563px;
    width: 60px;
    height: 17px;
    border-radius: 2px;
    background: #1797e8;
    color: #fff;
    font: 600 10.5px/17px Inter, sans-serif;
    text-align: center;
  }

  .login {
    position: absolute;
    left: 492px;
    top: 575px;
    width: 136px;
    height: 296px;
    box-sizing: border-box;
    background: #f5ebde;
    padding: 0 4px 0 5px;
    color: #111;
  }
  .login-top {
    height: 36px;
    position: relative;
    display: flex;
    align-items: center;
    justify-content: center;
    font: 800 12.5px/18px "Noto Sans CJK KR", sans-serif;
    padding-top: 9px;
    box-sizing: border-box;
  }
  .login-top svg {
    position: absolute;
    left: 1px;
    top: 16px;
  }
  .login-card {
    background: #fff;
    border-radius: 6px;
    height: 157px;
    box-sizing: border-box;
    padding: 7px 4px 0 8px;
  }
  .lc-title {
    font: 700 10px/14px "Noto Sans CJK KR", sans-serif;
    padding-left: 2px;
  }
  .inp {
    width: 107px;
    height: 19px;
    margin: 6px 0 0 3px;
    box-sizing: border-box;
    border: 1px solid #dedede;
    border-radius: 3px;
    font: 400 3.8px/8px "Noto Sans CJK KR", sans-serif;
    color: #aaa;
    padding-left: 3px;
  }
  .lbtn {
    width: 115px;
    height: 21px;
    border-radius: 11px;
    color: #fff;
    font: 700 9.5px/21px "Noto Sans CJK KR", sans-serif;
    text-align: center;
  }
  .lbtn.blue {
    background: #0a3ae4;
    margin-top: 12px;
  }
  .lbtn.black {
    background: #000;
    margin-top: 6px;
  }
  .lc-links {
    display: flex;
    justify-content: center;
    gap: 9px;
    margin-top: 8px;
    color: #0c3c0c;
    font: 700 7.5px/12px "Noto Sans CJK KR", sans-serif;
  }
  .login-card.easy {
    margin-top: 13px;
    height: 65px;
    padding: 6px 0 0 10px;
  }
  .easy-title {
    font: 700 7.2px/10px "Noto Sans CJK KR", sans-serif;
    color: #0c3c0c;
  }
  .socials {
    display: grid;
    grid-template-columns: repeat(4, 30px);
    margin: 8px 0 0 -5px;
  }
  .soc {
    display: flex;
    flex-direction: column;
    align-items: center;
  }
  .soc-ic {
    height: 17px;
    display: flex;
    align-items: center;
    justify-content: center;
  }
  .soc-tx {
    margin-top: 3px;
    font: 600 3.8px/5px "Noto Sans CJK KR", sans-serif;
    text-align: center;
    white-space: nowrap;
  }
  .kakao {
    width: 17px;
    height: 17px;
    background: #f7cb2d;
    border-radius: 2px;
    position: relative;
    display: flex;
    align-items: center;
    justify-content: center;
  }
  .kakao span {
    background: #3c2020;
    color: #f7cb2d;
    border-radius: 6px;
    font: 800 3.5px/7px Inter, sans-serif;
    padding: 0 1.5px;
  }

  .bgd {
    position: absolute;
    left: 641px;
    top: 575px;
    width: 121px;
    height: 121px;
    box-sizing: border-box;
    border-radius: 10px;
    background: #f5ebde;
    color: #111;
    padding-top: 17px;
    display: flex;
    flex-direction: column;
    align-items: center;
  }
  .bgd-x {
    position: absolute;
    right: 10px;
    top: 9px;
  }
  .bgd-red {
    margin-top: 6px;
    font: 700 7px/10px "Noto Sans CJK KR", sans-serif;
    color: #e02010;
    margin-bottom: 10px;
  }
  .bgd-a {
    font: 700 8.7px/12px "Noto Sans CJK KR", sans-serif;
    margin-bottom: 12px;
    white-space: nowrap;
  }
  .bgd-b {
    font: 700 8px/12px "Noto Sans CJK KR", sans-serif;
    white-space: nowrap;
  }
  .bgd-btns {
    display: flex;
    gap: 8px;
    margin-top: 5px;
    padding-left: 2px;
  }
  .bgd-btns span {
    width: 48px;
    height: 23px;
    box-sizing: border-box;
    border-radius: 12px;
    font: 700 7.5px/21px "Noto Sans CJK KR", sans-serif;
    text-align: center;
    border: 1px solid #85786d;
  }
  .bgd-btns .yes {
    background: #0a3ae4;
    border-color: #0a3ae4;
    color: #fff;
  }

  .dial {
    position: absolute;
    left: 823px;
    top: 605px;
    width: 171px;
    height: 182px;
    border-radius: 50%;
    background: #d9d9d9;
  }
  .dial-day,
  .dial-now,
  .dial-month {
    position: absolute;
    font: 700 12px/14px Inter, "Noto Sans CJK KR", sans-serif;
    color: #808080;
    white-space: nowrap;
  }
  .dial-now {
    left: 9px;
    top: 79px;
    color: #000;
    font-size: 11px;
  }
  .dial-month {
    left: 59px;
    top: 79px;
    color: #f01010;
    font-size: 13px;
    line-height: 16px;
  }
  .dial-line {
    position: absolute;
    left: 2px;
    top: 97px;
    width: 86px;
    height: 3.5px;
    background: #f01010;
  }

  .right-panel {
    width: 235px;
    flex: none;
    box-sizing: border-box;
    border-left: 1px solid #3e3e3e;
    background: #2c2c2c;
    position: relative;
  }
  .tabs {
    height: 38px;
    display: flex;
    align-items: center;
    gap: 15px;
    padding-left: 15px;
    font-weight: 600;
    color: #9a9a9a;
  }
  .tabs .insp {
    margin-left: 1px;
  }
  .tabs .on,
  .on {
    color: #f5f5f5;
    font-weight: 600;
  }
  .aligns {
    display: flex;
    align-items: center;
    height: 32px;
    padding: 0 0 9px 15px;
    gap: 18px;
    border-bottom: 1px solid #3e3e3e;
  }
  .aligns .dist {
    display: flex;
    align-items: center;
    gap: 1px;
    margin-left: -3px;
    color: #ccc;
  }
  .sec {
    padding: 8px 0;
    border-bottom: 1px solid #3e3e3e;
    position: relative;
  }
  .sec-title {
    height: 32px;
    display: flex;
    align-items: center;
    justify-content: space-between;
    padding: 0 14px 0 15px;
    font-weight: 600;
  }
  .sec-title.dim {
    color: #a2a2a2;
  }
  .sec-title .on {
    display: flex;
    align-items: center;
    gap: 5px;
  }
  .orient {
    position: absolute;
    left: 139px;
    top: 12px;
    display: flex;
  }
  .orient i {
    width: 24px;
    height: 24px;
    display: flex;
    align-items: center;
    justify-content: center;
    border-radius: 2px;
  }
  .orient .act {
    background: #444;
  }
  .props {
    display: grid;
    grid-template-columns: 96px 96px 16px;
    grid-auto-rows: 32px;
    padding-left: 15px;
    align-items: center;
  }
  .prop {
    display: flex;
    align-items: center;
    color: #eee;
  }
  .prop em {
    width: 16px;
    margin-right: 8px;
    font-style: normal;
    color: #8c8c8c;
    text-align: center;
    display: flex;
    justify-content: center;
  }
  .prop-ic {
    display: flex;
    justify-content: center;
  }
  .row {
    height: 32px;
    display: flex;
    align-items: center;
    padding-left: 15px;
    color: #eee;
  }
  .clip {
    padding-left: 17px;
  }
  .check {
    width: 12px;
    height: 12px;
    border-radius: 2px;
    background: #0c8ce9;
    display: flex;
    align-items: center;
    justify-content: center;
    margin-right: 10px;
  }
  .layer-row {
    padding-left: 19px;
  }
  .drop {
    margin-right: 12px;
  }
  .pass {
    display: flex;
    align-items: center;
    gap: 5px;
    width: 121px;
  }
  .pass .chev {
    color: #888;
  }
  .pct {
    width: 48px;
  }
  .fill-act {
    display: flex;
    align-items: center;
    gap: 21px;
  }
  .fill-act.narrow {
    gap: 18px;
  }
  .sw {
    width: 16px;
    height: 16px;
    flex: none;
    margin-right: 8px;
  }
  .sw.white {
    background: #fff;
  }
  .hex {
    width: 73px;
  }
  .pc {
    width: 64px;
  }
  .see {
    color: #aaa;
    padding-left: 22px;
    gap: 14px;
  }
  .help {
    position: absolute;
    left: 180px;
    top: 803px;
    width: 36px;
    height: 36px;
    border-radius: 50%;
    background: #222;
    color: #eee;
    font: 300 18px/36px Inter, sans-serif;
    text-align: center;
  }
</style>
